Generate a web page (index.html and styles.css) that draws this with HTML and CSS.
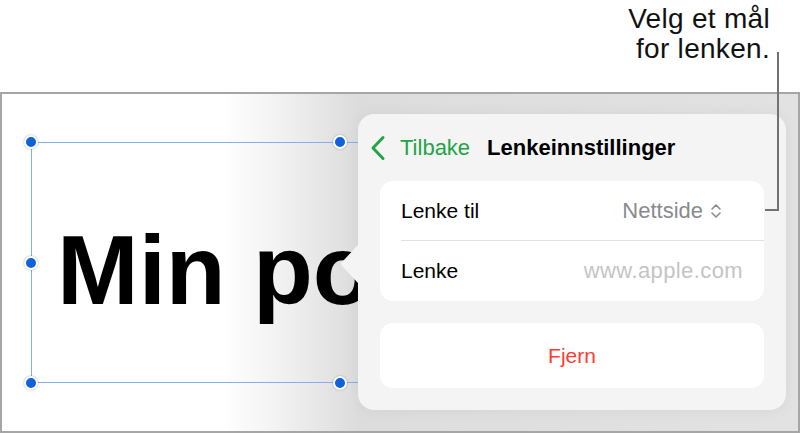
FILE: index.html
```html
<!DOCTYPE html>
<html lang="no">
<head>
<meta charset="utf-8">
<title>Lenkeinnstillinger</title>
<link rel="stylesheet" href="styles.css">
</head>
<body>
<div class="callout">
  <p class="callout-text">Velg et mål<br>for lenken.</p>
</div>
<div class="callout-line"></div>
<div class="frame">
  <div class="selection">
    <div class="slide-title">Min po</div>
    <span class="handle h-tl"></span>
    <span class="handle h-tm"></span>
    <span class="handle h-ml"></span>
    <span class="handle h-bl"></span>
    <span class="handle h-bm"></span>
  </div>
  <div class="popover">
    <svg class="arrow" width="20" height="40" viewBox="0 0 20 40"><path d="M19 0 L19 40 C15 36 6 26 2 22 C0.6 20.8 0.6 19.2 2 18 C6 14 15 4 19 0 Z" fill="#f4f4f4"/></svg>
    <div class="pop-header">
      <div class="back">
        <svg width="16" height="26" viewBox="0 0 16 26"><path d="M13 2.5 L3 13 L13 23.5" fill="none" stroke="#22a447" stroke-width="3" stroke-linecap="round" stroke-linejoin="round"/></svg>
        <span class="back-label">Tilbake</span>
      </div>
      <span class="pop-title">Lenkeinnstillinger</span>
    </div>
    <div class="card">
      <div class="row">
        <div class="row-inner sep">
          <span class="label">Lenke til</span>
          <span class="value">Nettside
            <svg class="updown" width="12" height="18" viewBox="0 0 12 18"><path d="M2 7 L6 3 L10 7 M2 11 L6 15 L10 11" fill="none" stroke="#8a8a8e" stroke-width="1.6" stroke-linecap="round" stroke-linejoin="round"/></svg>
          </span>
        </div>
      </div>
      <div class="row">
        <div class="row-inner">
          <span class="label">Lenke</span>
          <span class="placeholder">www.apple.com</span>
        </div>
      </div>
    </div>
    <div class="card remove">Fjern</div>
  </div>
</div>
</body>
</html>
```
FILE: styles.css
```css
html, body {
  margin: 0;
  padding: 0;
  background: #ffffff;
  font-family: "Liberation Sans", Arial, sans-serif;
}
body {
  width: 804px;
  height: 433px;
  position: relative;
  overflow: hidden;
}
.callout {
  height: 92px;
  box-sizing: border-box;
  padding: 4px 34px 0 0;
  display: flex;
  justify-content: flex-end;
}
.callout-text {
  margin: 0;
  font-size: 28px;
  line-height: 30px;
  letter-spacing: 0.3px;
  text-align: right;
  color: #111;
}
.callout-line {
  position: absolute;
  left: 765px;
  top: 52px;
  width: 12px;
  height: 157px;
  border-right: 2px solid #727272;
  border-bottom: 2px solid #727272;
  z-index: 5;
}
.frame {
  position: relative;
  width: 800px;
  height: 341px;
  box-sizing: border-box;
  border: 2px solid #a6a6a6;
  overflow: hidden;
  background: linear-gradient(to right, #ffffff 0, #ffffff 220px, #f6f6f6 260px, #eaeaea 305px, #dcdcdc 356px, #dedede 430px, #e2e2e2 100%);
}
.selection {
  position: absolute;
  left: 29px;
  top: 48px;
  width: 618px;
  height: 241px;
  border: 1px solid #85aef0;
  box-sizing: border-box;
  padding: 78px 0 0 25px;
}
.slide-title {
  font-size: 98px;
  font-weight: bold;
  line-height: 1;
  color: #000;
  white-space: nowrap;
}
.handle {
  position: absolute;
  width: 10px;
  height: 10px;
  border-radius: 50%;
  background: #0f62dc;
  border: 2px solid #fff;
  box-shadow: 0 0 2px rgba(0, 0, 0, 0.35);
}
.h-tl { left: -8px; top: -8px; }
.h-tm { left: 301px; top: -8px; }
.h-ml { left: -8px; top: 113px; }
.h-bl { left: -8px; bottom: -8px; }
.h-bm { left: 301px; bottom: -8px; }
.popover {
  position: absolute;
  left: 356px;
  top: 20px;
  width: 428px;
  height: 296px;
  box-sizing: border-box;
  background: #f4f4f4;
  border-radius: 16px;
  padding: 0 22px;
  box-shadow: 0 0 16px rgba(0, 0, 0, 0.05);
  display: flex;
  flex-direction: column;
}
.arrow {
  position: absolute;
  left: -18px;
  top: 130px;
}
.pop-header {
  height: 67px;
  display: flex;
  align-items: center;
  margin-left: -10px;
  gap: 17px;
}
.back {
  display: flex;
  align-items: center;
  gap: 14px;
}
.back svg { display: block; }
.back-label {
  font-size: 22px;
  color: #22a447;
}
.pop-title {
  font-size: 22px;
  font-weight: bold;
  color: #000;
}
.card {
  background: #ffffff;
  border-radius: 13px;
}
.row {
  padding-left: 21px;
}
.row-inner {
  height: 59px;
  display: flex;
  align-items: center;
  justify-content: space-between;
  padding-right: 21px;
  font-size: 21px;
}
.row-inner.sep {
  border-bottom: 1px solid #e2e2e4;
}
.row + .row .row-inner { height: 60px; }
.label { color: #000; }
.value {
  color: #8a8a8e;
  display: flex;
  align-items: center;
  gap: 7px;
  margin-right: 21px;
  font-size: 22px;
}
.updown { display: block; }
.placeholder {
  color: #c4c4c6;
  font-size: 22px;
  letter-spacing: 0.4px;
}
.remove {
  margin-top: 22px;
  height: 65px;
  display: flex;
  align-items: center;
  justify-content: center;
  color: #ff3b30;
  font-size: 21px;
}
```
